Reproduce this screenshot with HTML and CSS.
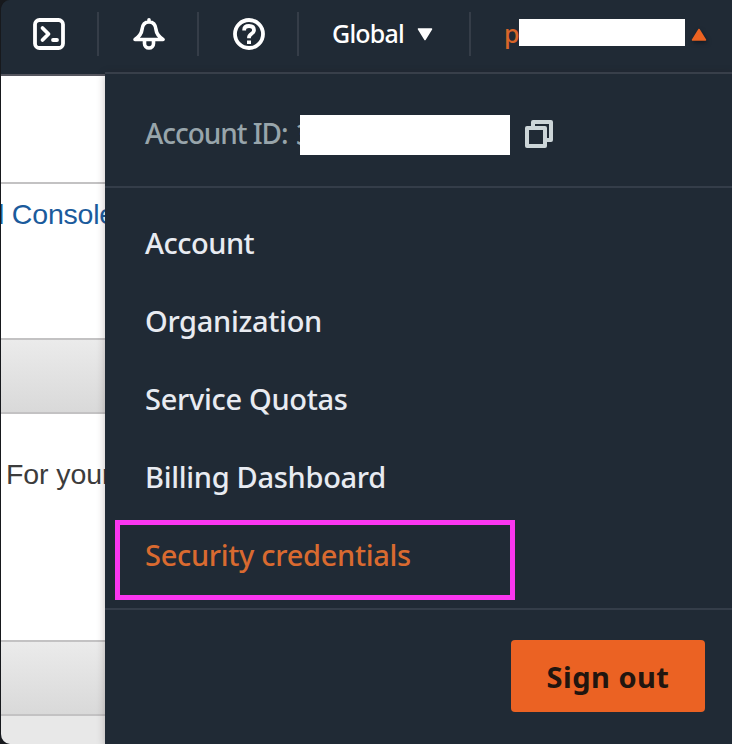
FILE: index.html
```html
<!DOCTYPE html>
<html lang="en">
<head>
<meta charset="utf-8">
<title>Account menu</title>
<link rel="stylesheet" href="styles.css">
</head>
<body>
<div class="window">
  <header class="topbar">
    <div class="tool">
      <svg class="icon" viewBox="0 0 32 32"><rect x="2" y="2" width="28" height="28" rx="4.5"/><path d="M9.500 10l6 6-6 6M20 22h4" stroke-linecap="round" stroke-linejoin="round"/></svg>
    </div>
    <div class="tool">
      <svg class="icon bell" viewBox="0 0 32 32"><path d="M16 1.800v2M2 21.500C6.500 18.500 8.500 16 9 11.500C9.500 6.500 12 4 16 4S22.500 6.500 23 11.500C23.500 16 25.500 18.500 30 21.500ZM11.500 22v3.500a4.500 4.500 0 0 0 9 0V22" stroke-linejoin="round" stroke-linecap="round"/></svg>
    </div>
    <div class="tool">
      <svg class="icon" viewBox="0 0 32 32"><circle cx="16" cy="16" r="14"/><path d="M11.200 12.500V11.800C11.200 9.500 13 8 16 8s5 1.500 5 4.200c0 3.800-5 3.300-5 7.300v.8"/><path d="M16 22.500v3.500" stroke-width="4"/></svg>
    </div>
    <div class="region"><span class="region-name">Global</span><svg class="caret" viewBox="0 0 16 13"><path d="M1.500 1h13L8 11.500Z"/></svg></div>
    <div class="user"><span class="user-name">p</span><span class="user-mask"></span><svg class="caret up" viewBox="0 0 16 13"><path d="M1.500 12h13L8 1.500Z"/></svg></div>
  </header>
  <main class="content">
    <section class="page">
      <div class="row intro"></div>
      <div class="row console"><a class="console-link">l Console</a></div>
      <div class="row band"></div>
      <div class="row note"><span class="note-text">For your</span></div>
      <div class="row band"></div>
      <div class="row last"></div>
    </section>
    <aside class="menu">
      <div class="account">
        <span class="account-label">Account ID:</span><span class="digit">3</span><span class="account-mask"></span>
        <svg class="copy" viewBox="0 0 28 28"><path d="M8 7V2h18v18h-5M2 8h18v18H2Z" stroke-linejoin="round"/></svg>
      </div>
      <nav class="links">
        <a class="link account-link">Account</a>
        <a class="link organization">Organization</a>
        <a class="link quotas">Service Quotas</a>
        <a class="link billing">Billing Dashboard</a>
        <a class="link current">Security credentials</a>
      </nav>
      <div class="footer"><button class="signout">Sign out</button></div>
    </aside>
  </main>
</div>
</body>
</html>
```
FILE: styles.css
```css
*, *::after { box-sizing: border-box; }
body { margin: 0; background: #17191d; font-family: "Noto Sans", sans-serif; }
.window {
  width: 732px; height: 744px; display: flex; flex-direction: column;
  border-left: 1px solid #17191d; border-radius: 10px 0 0 10px;
  overflow: hidden; background: #202a35;
}
.topbar { height: 72px; flex: none; display: flex; padding-top: 12px; background: #202a35; }
.tool, .region { height: 44px; border-right: 2px solid #353d48; display: flex; align-items: center; }
.tool { width: 100px; padding-left: 34px; }
.tool:first-child { width: 98px; padding-left: 32px; }
.icon { width: 32px; height: 32px; fill: none; stroke: #fff; stroke-width: 3.8; }
.bell { stroke-width: 3.6; }
.region { width: 172px; padding-left: 33px; gap: 13px; color: #fff; font-size: 25px; font-weight: 500; }
.region-name { width: 72px; margin-top: -2px; white-space: nowrap; letter-spacing: -.8px; }
.caret { width: 16px; height: 13px; fill: #fff; stroke: #fff; stroke-width: 1.5; stroke-linejoin: round; }
.user { display: flex; align-items: center; height: 44px; padding-left: 33px; color: #d96529; font-size: 25px; font-weight: 500; }
.user-name { width: 15px; margin-top: -3px; }
.user-mask { width: 166px; height: 27px; margin-top: -3px; background: #fff; z-index: 1; }
.up { margin-left: 6px; fill: #ec6322; stroke: #ec6322; filter: drop-shadow(1px 2px 2px #121923); }

.content { flex: 1; display: flex; }
.page { width: 104px; flex: none; padding-top: 2px; overflow: hidden; }
.row { border-top: 2px solid #c3c2c3; background: #fff; white-space: nowrap; font-family: "Liberation Sans", sans-serif; font-size: 28.5px; }
.intro { height: 108px; border-color: #55565f; }
.console { height: 156px; padding-top: 14px; }
.console-link { display: block; margin-left: -3px; color: #1b5b9c; letter-spacing: -.2px; }
.band { height: 74px; background: linear-gradient(#ebebeb, #d9d9d9); }
.note { height: 228px; padding: 44px 0 0 5px; color: #3c3c3c; }
.note-text { letter-spacing: -.1px; }
.last { height: 30px; background: #e8e8e8; }

.menu { flex: 1; display: flex; flex-direction: column; border-top: 2px solid #383f4a; background: #202a35; box-shadow: 0 2px 8px rgba(40, 20, 20, .28); z-index: 1; }
.account { height: 114px; padding: 8px 0 0 40px; display: flex; align-items: center; border-bottom: 2px solid #343d49; color: #98a5ab; font-size: 28px; font-weight: 500; }
.account-label { width: 151px; margin-top: -2px; letter-spacing: -1.05px; white-space: nowrap; }
.digit { width: 4px; overflow: hidden; }
.account-mask { width: 210px; height: 40px; margin-top: 2px; background: #fff; }
.copy { width: 28px; height: 28px; margin-left: 15px; fill: none; stroke: #ccd5d8; stroke-width: 4; }
.links { height: 422px; padding: 15px 0 0 40px; border-bottom: 2px solid #343d49; }
.link { display: flex; align-items: center; height: 78px; color: #e8ebf1; font-size: 29px; font-weight: 500; letter-spacing: -.3px; white-space: nowrap; }
.account-link { letter-spacing: -.5px; }
.current { position: relative; color: #d96a30; }
.current::after { content: ""; position: absolute; left: -30px; top: 5px; width: 400px; height: 80px; border: 5px solid #fa36f0; }
.footer { flex: 1; display: flex; justify-content: flex-end; padding: 30px 27px 0 0; }
.signout { width: 194px; height: 72px; padding: 1px 0 0; border: 0; border-radius: 4px; background: #eb6223; color: #21150f; font: 700 29px "Noto Sans", sans-serif; letter-spacing: .5px; }
```
